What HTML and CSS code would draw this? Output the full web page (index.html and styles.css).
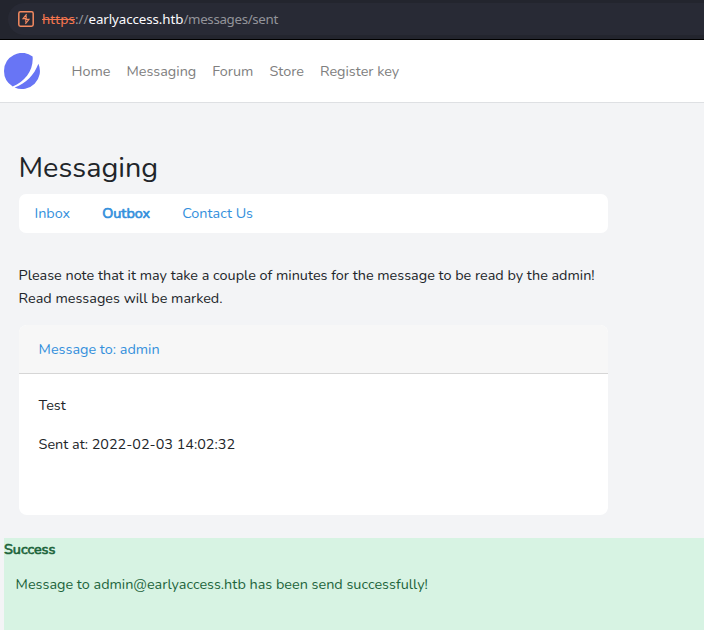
FILE: index.html
```html
<!DOCTYPE html>
<html lang="en">
<head>
<meta charset="utf-8">
<title>Messaging</title>
<link rel="stylesheet" href="styles.css">
</head>
<body>
<header class="browser">
  <div class="address">
    <svg class="burp" width="16" height="16" viewBox="0 0 16 16" fill="none">
      <rect x="0.8" y="0.8" width="14.4" height="14.4" rx="1.6" stroke="#f58a60" stroke-width="1.5"/>
      <path d="M8.6 3.2 5 7.6H8.2V4.4M7.4 12.8 11 8.4H7.8V11.6" stroke="#f58a60" stroke-width="1.1"/>
    </svg>
    <div class="url"><span class="scheme">https</span>://<span class="host">earlyaccess.htb</span><span class="path">/messages/sent</span></div>
  </div>
</header>
<nav class="navbar">
  <svg class="logo" width="36" height="36" viewBox="0 0 36 36" fill="#6875f5">
    <path d="M28.6 3.5A18 18 0 0 0 0 18A18 18 0 0 0 8.7 33.4C21 28.5 29.8 17 28.6 3.5Z"/>
    <path d="M34.4 10.7C30 22 22.5 30.2 10.6 34.4A18 18 0 0 0 34.4 10.7Z"/>
  </svg>
  <a>Home</a><a>Messaging</a><a>Forum</a><a>Store</a><a>Register key</a>
</nav>
<main class="content">
  <h2>Messaging</h2>
  <div class="tabs"><a>Inbox</a><a class="active">Outbox</a><a>Contact Us</a></div>
  <p class="note">Please note that it may take a couple of minutes for the message to be read by the admin!<br>Read messages will be marked.</p>
  <section class="card">
    <div class="card-header"><a>Message to: admin</a></div>
    <div class="card-body">
      <p>Test</p>
      <p>Sent at: 2022-02-03 14:02:32</p>
    </div>
  </section>
</main>
<div class="alert">
  <strong>Success</strong>
  <p>Message to admin@earlyaccess.htb has been send successfully!</p>
</div>
</body>
</html>
```
FILE: styles.css
```css
* { box-sizing: border-box; }
body {
  margin: 0;
  height: 630px;
  overflow: hidden;
  display: flex;
  flex-direction: column;
  background: #f3f4f6;
  color: #212529;
  font: 14.4px/23px Nunito, Lato, sans-serif;
}
p, h2 { margin: 0; }
a { color: #3490dc; white-space: nowrap; }
.browser {
  height: 40px;
  flex: none;
  padding: 3px 0 4px 8px;
  background: #23252e;
  border-bottom: 1px solid #000;
}
.address {
  height: 32px;
  display: flex;
  align-items: center;
  padding-left: 10px;
  background: #282a35;
  border-radius: 16px 0 0 16px;
}
.url {
  margin-left: 8px;
  color: #93949a;
  font: 13.33px/20px "Noto Sans", sans-serif;
  white-space: nowrap;
}
.scheme { color: #f5764f; text-decoration: line-through; letter-spacing: 0.1px; }
.host { color: #fbfbfe; letter-spacing: -0.08px; }
.path { letter-spacing: -0.33px; }
.navbar {
  height: 63px;
  flex: none;
  display: flex;
  align-items: center;
  gap: 16px;
  padding-left: 4px;
  background: #fff;
  border-bottom: 1px solid #dee0e3;
}
.navbar a { color: #808080; }
.logo { margin-right: 15.5px; }
.content { width: 589px; margin-left: 19px; padding-top: 47px; flex: none; }
h2 { font-size: 28.8px; line-height: 35px; font-weight: 400; margin: 0 0 9px -0.5px; }
.tabs {
  height: 39px;
  display: flex;
  align-items: center;
  gap: 32px;
  padding-left: 15.5px;
  background: #fff;
  border-radius: 7px;
}
.active, .alert strong { font-weight: 400; -webkit-text-stroke: 0.7px currentColor; }
.note { margin: 31px 0 0 -0.4px; white-space: nowrap; }
.card { margin-top: 15px; height: 190px; background: #fff; border-radius: 8px; overflow: hidden; }
.card-header { height: 49px; padding: 13px 19.6px; background: #f7f7f7; border-bottom: 1px solid #d6d6d6; }
.card-body { padding: 20px 19.6px; }
.card-body p { margin-bottom: 16px; }
.alert { margin: 23px 0 0 4px; flex: 1; background: #d7f3e3; color: #1d643b; }
.alert strong { display: block; }
.alert p { margin: 12px 0 0 11.6px; }
```
